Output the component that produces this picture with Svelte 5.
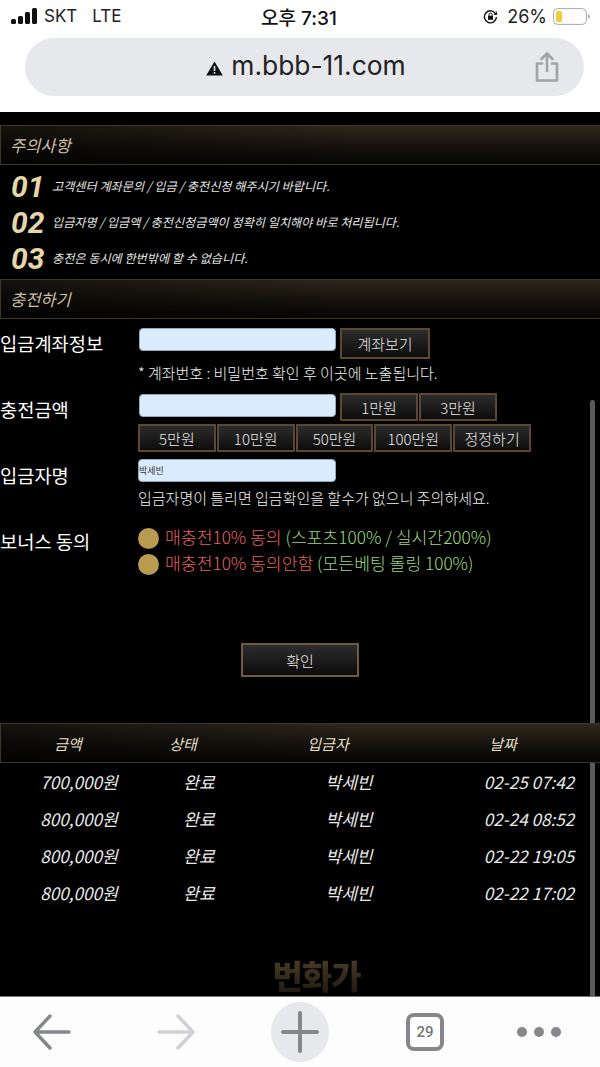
<script>
  const notices = [
    ['01', '고객센터 계좌문의 / 입금 / 충전신청 해주시기 바랍니다.'],
    ['02', '입금자명 / 입금액 / 충전신청금액이 정확히 일치해야 바로 처리됩니다.'],
    ['03', '충전은 동시에 한번밖에 할 수 없습니다.']
  ];
  const amounts = ['5만원', '10만원', '50만원', '100만원', '정정하기'];
  const history = [
    ['700,000원', '완료', '박세빈', '02-25 07:42'],
    ['800,000원', '완료', '박세빈', '02-24 08:52'],
    ['800,000원', '완료', '박세빈', '02-22 19:05'],
    ['800,000원', '완료', '박세빈', '02-22 17:02']
  ];
</script>

<div class="phone">
  <header class="chrome">
    <div class="status">
      <div class="carrier">
        <svg width="27" height="17" viewBox="0 0 27 17"><rect x="0" y="11" width="5" height="5" rx="1.5"/><rect x="7" y="8" width="5" height="8" rx="1.5"/><rect x="14" y="4" width="5" height="12" rx="1.5"/><rect x="21" y="0" width="5" height="16" rx="1.5"/></svg>
        <span class="skt">SKT</span><span>LTE</span>
      </div>
      <div class="clock">오후 7:31</div>
      <div class="batt">
        <svg width="15" height="15" viewBox="0 0 15 15" fill="none" stroke="#111" stroke-width="1.4"><path d="M12.8 5.2A6 6 0 1 0 13.4 8"/><path d="M11 5.4h3l-1-3" stroke-width="1"/><rect x="5" y="6.8" width="5" height="4" fill="#111" stroke="none"/><path d="M6 7V5.6a1.5 1.5 0 0 1 3 0V7" stroke-width="1"/></svg>
        <span>26%</span>
        <svg width="37" height="17" viewBox="0 0 37 17"><rect x=".6" y=".6" width="32.8" height="15.8" rx="4" fill="none" stroke="#aaa" stroke-width="1"/><rect x="3" y="3" width="6" height="11" rx="1.5" fill="#f5cb42"/><path d="M35 6v5a2.6 2.6 0 0 0 0-5z" fill="#aaa"/></svg>
      </div>
    </div>
    <div class="urlbar">
      <div class="url">
        <svg width="17" height="15" viewBox="0 0 17 15"><path d="M8.5 0.5L16.8 14.5H0.2z" fill="#111"/><rect x="7.7" y="5" width="1.6" height="5" fill="#e6e8ec"/><rect x="7.7" y="11" width="1.6" height="1.7" fill="#e6e8ec"/></svg>
        <span>m.bbb-11.com</span>
      </div>
      <svg class="share" width="24" height="32" viewBox="0 0 24 32" fill="none" stroke="#a2a4a8" stroke-width="2.6" stroke-linecap="round" stroke-linejoin="round"><path d="M12 20V2.5M6.5 8L12 2.5 17.5 8"/><path d="M7 12.5H2v17h20v-17h-5"/></svg>
    </div>
  </header>

  <main class="page">
    <div class="scrollbar"></div>
    <h2 class="bar first">주의사항</h2>
    <ul class="notices">
      {#each notices as n}
        <li><b>{n[0]}</b><span>{n[1]}</span></li>
      {/each}
    </ul>
    <h2 class="bar">충전하기</h2>

    <section class="form">
      <div class="row r1">
        <label>입금계좌정보</label>
        <div class="ctl">
          <div class="line"><div class="inp"></div><button class="btn w90">계좌보기</button></div>
          <p class="hint h1">* 계좌번호 : 비밀번호 확인 후 이곳에 노출됩니다.</p>
        </div>
      </div>
      <div class="row r2">
        <label>충전금액</label>
        <div class="ctl">
          <div class="line"><div class="inp low"></div><button class="btn w78">1만원</button><button class="btn w78 tight">3만원</button></div>
          <div class="amounts">
            {#each amounts as a}<button class="btn amt">{a}</button>{/each}
          </div>
        </div>
      </div>
      <div class="row r3">
        <label>입금자명</label>
        <div class="ctl">
          <div class="inp named">박세빈</div>
          <p class="hint h2">입금자명이 틀리면 입금확인을 할수가 없으니 주의하세요.</p>
        </div>
      </div>
      <div class="row r4">
        <label>보너스 동의</label>
        <div class="ctl radios">
          <div class="radio"><i></i><span class="txt"><span class="red">매충전10% 동의</span> <span class="green">(스포츠100% / 실시간200%)</span></span></div>
          <div class="radio"><i></i><span class="txt"><span class="red">매충전10% 동의안함</span> <span class="green">(모든베팅 롤링 100%)</span></span></div>
        </div>
      </div>
    </section>

    <div class="confirm"><button class="btn ok">확인</button></div>

    <div class="bar thead">
      <span>금액</span><span>상태</span><span>입금자</span><span>날짜</span>
    </div>
    <div class="tbody">
      {#each history as r}
        <div class="tr">{#each r as c}<span>{c}</span>{/each}</div>
      {/each}
    </div>
    <div class="mark">번화가</div>
  </main>

  <footer class="toolbar">
    <svg width="40" height="36" viewBox="0 0 40 36" fill="none" stroke="#85878b" stroke-width="3.4" stroke-linecap="round" stroke-linejoin="round"><path d="M37 18H3M18 2L3 18l15 16"/></svg>
    <svg width="40" height="36" viewBox="0 0 40 36" fill="none" stroke="#cfd0d2" stroke-width="3.4" stroke-linecap="round" stroke-linejoin="round"><path d="M3 18h34M22 2l15 16-15 16"/></svg>
    <div class="plus"><svg width="38" height="42" viewBox="0 0 38 42" fill="none" stroke="#85878b" stroke-width="4" stroke-linecap="round"><path d="M19 2v38M2 21h34"/></svg></div>
    <div class="tabs">29</div>
    <div class="dots"><i></i><i></i><i></i></div>
  </footer>
</div>

<style>
  :global(body) { margin: 0; background: #000; }
  .phone {
    width: 600px; height: 1067px; overflow: hidden; display: flex; flex-direction: column;
    font-family: "Noto Sans CJK KR", "Noto Sans", sans-serif; color: #fff;
  }
  .chrome { height: 112px; flex: none; background: #fff; color: #111; box-sizing: border-box; }
  .status {
    height: 38px; display: grid; grid-template-columns: 1fr auto 1fr; align-items: center;
    padding: 0 10px 6px 11px; box-sizing: border-box; font-family: Inter, "Noto Sans CJK KR", sans-serif;
  }
  .carrier { display: flex; align-items: center; font-size: 17px; color: #222; }
  .carrier svg { margin-right: 6px; fill: #111; }
  .skt { margin-right: 15px; }
  .clock { font-size: 19px; font-weight: 500; margin-left: -3px; }
  .batt { display: flex; align-items: center; justify-content: flex-end; gap: 4px; font-size: 18px; color: #222; }
  .batt span { margin: 0 2px 0 5px; }
  .urlbar {
    margin: 0 16px 0 25px; height: 58px; border-radius: 29px; background: #e6e8ec;
    display: flex; align-items: center; justify-content: center; position: relative;
  }
  .url { display: flex; align-items: center; gap: 8px; font-family: Inter, sans-serif; font-size: 26.4px; color: #222; margin-left: 3px; }
  .url svg { margin-top: 3px; }
  .url span { margin-top: -4px; }
  .share { position: absolute; right: 25px; top: 13px; }

  .page { flex: 1; background: #000; position: relative; overflow: hidden; display: flex; flex-direction: column; }
  .scrollbar { position: absolute; left: 590px; width: 5px; top: 288px; bottom: 0; background: #5a5a5a; border-radius: 3px 3px 0 0; }
  .bar {
    margin: 0; height: 40px; box-sizing: border-box; flex: none; position: relative;
    border: 1px solid #3d372a; border-right: 0;
    background:
      linear-gradient(90deg, rgba(0,0,0,.55), rgba(0,0,0,0) 60%),
      linear-gradient(180deg, #2e281c 0%, #15120d 55%, #050505 100%);
    display: flex; align-items: center; padding-left: 9px;
    font-size: 16.5px; font-weight: 400; font-style: italic; color: #c9bfa5;
  }
  .first { margin-top: 13px; }
  .notices { list-style: none; margin: 0; padding: 4px 0 0 11px; height: 114px; box-sizing: border-box; flex: none; }
  .notices li { height: 36px; display: flex; align-items: center; }
  .notices b { width: 41px; font-family: Roboto, sans-serif; font-size: 30px; font-weight: 700; font-style: italic; color: #e6d6a8; line-height: 30px; }
  .notices span { font-size: 12.15px; font-style: italic; color: #e4e4e4; font-weight: 400; margin-top: -3px; }
  .form { display: flex; flex-direction: column; flex: none; height: 279px; }
  .row { display: flex; flex: none; }
  .row label { width: 138px; flex: none; font-size: 18.7px; line-height: 26px; color: #fff; box-sizing: border-box; }
  .ctl { flex: 1; }
  .r1 { margin-top: 9px; height: 65px; }
  .r1 label { margin-top: 2px; }
  .r2 { height: 65px; }
  .r2 label { margin-top: 3px; }
  .r3 { height: 65px; }
  .r3 label { margin-top: 4px; }
  .r4 label { margin-top: 5px; }
  .line { display: flex; align-items: flex-start; }
  .inp {
    width: 197px; height: 23px; box-sizing: border-box; background: #d9ecfd; border: 1px solid #9aa8b5; border-radius: 4px;
    margin-left: 1px; flex: none; color: #333; font-size: 9px; line-height: 21px;
  }
  .line .inp { margin-right: 4px; }
  .line .low { margin-top: 1px; }
  .named { margin: 1px 0 0; width: 198px; }
  .btn {
    box-sizing: border-box; padding: 0; height: 28px; border: 2px solid #5a4830; border-radius: 0;
    background: linear-gradient(180deg, #2c2c2c, #0c0c0c); color: #e8e8e8;
    font-family: inherit; font-size: 15px; font-weight: 300; display: block;
  }
  .w90 { width: 90px; height: 31px; }
  .w78 { width: 78px; }
  .tight { margin-left: 1px; }
  .hint { margin: 0; font-size: 15px; font-weight: 300; color: #f2f2f2; line-height: 20px; }
  .h1 { margin-top: 4px; }
  .h2 { margin-top: 6px; }
  .amounts { display: flex; gap: 1px; margin-top: 3px; }
  .amt { width: 77.8px; }
  .radios { margin-top: 2px; }
  .radio { height: 26px; display: flex; align-items: center; font-size: 17.2px; font-weight: 300; white-space: pre; }
  .radio i { width: 21px; height: 21px; border-radius: 50%; background: #b89b4e; margin-right: 6px; flex: none; }
  .txt { margin-top: -3px; }
  .red { color: #e8625f; }
  .green { color: #9ada7c; }
  .confirm { display: flex; justify-content: center; margin-top: 45px; flex: none; }
  .ok { width: 118px; height: 34px; font-size: 15px; border-color: #6d5b42; }
  .thead, .tr { display: grid; }
  .thead { margin-top: 46px; padding: 0; grid-template-columns: 134px 96px 194px 156px; justify-items: center; font-size: 15px; color: #e6dfc8; }
  .tbody { flex: none; }
  .tr { height: 37px; align-items: center; justify-items: center; grid-template-columns: 158px 82px 218px 142px; font-size: 17.1px; font-style: italic; font-weight: 400; color: #e8e8e8; }
  .mark {
    margin-top: 46px; text-align: center; padding-left: 33px; font-size: 33px; font-weight: 900; line-height: 36px; letter-spacing: -1px;
    background: linear-gradient(180deg, #4c3f28, #1f1a10); -webkit-background-clip: text; background-clip: text; color: transparent;
  }
  .toolbar {
    height: 71px; flex: none; background: #fdfdfd; border-top: 1px solid #777; box-sizing: border-box;
    display: flex; align-items: center; position: relative; padding: 0 0 0 32px;
  }
  .toolbar svg:nth-child(2) { margin-left: 84px; }
  .plus { width: 58px; height: 60px; border-radius: 50%; background: #e6e8ec; display: flex; align-items: center; justify-content: center; margin-left: 75px; }
  .tabs { width: 38px; height: 38px; box-sizing: border-box; border: 4px solid #85878b; border-radius: 8px; color: #777; font-family: Roboto, sans-serif; font-size: 15px; font-weight: 500; display: flex; align-items: center; justify-content: center; margin-left: 77px; }
  .dots { display: flex; gap: 7px; margin-left: 73px; }
  .dots i { width: 10px; height: 10px; border-radius: 50%; background: #85878b; }
</style>
